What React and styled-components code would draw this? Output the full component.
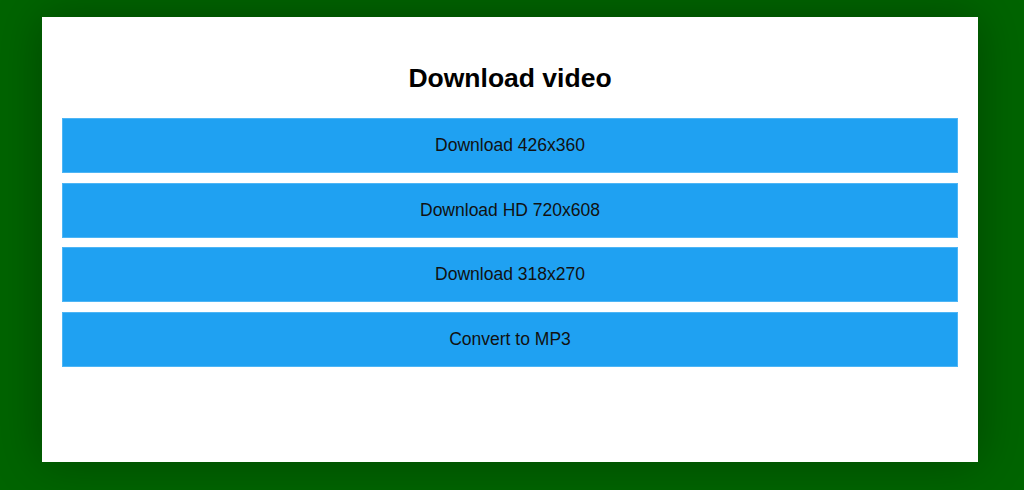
import React from "react";
import { styled, createGlobalStyle } from "styled-components";

const GlobalStyle = createGlobalStyle`
  html, body {
    margin: 0;
    padding: 0;
    background: #006400;
    font-family: "Liberation Sans", Arial, sans-serif;
  }
`;

const Page = styled.div`
  width: 1024px;
  height: 490px;
  padding: 17px 46px 0 42px;
  box-sizing: border-box;
`;

const Card = styled.div`
  background: #ffffff;
  height: 445px;
  padding: 0 20px;
  box-sizing: border-box;
  box-shadow: 0 0 45px rgba(0, 0, 0, 0.3);
  overflow: hidden;
`;

const Title = styled.h2`
  margin: 46px 0 25px;
  font-size: 26.5px;
  line-height: 30px;
  font-weight: 700;
  text-align: center;
  color: #000;
`;

const ButtonList = styled.div`
  display: flex;
  flex-direction: column;
  gap: 9.5px;
`;

const DownloadButton = styled.button`
  height: 55px;
  width: 100%;
  border: 1px solid #4db5f5;
  background: #1fa1f2;
  color: #111;
  font-family: "Liberation Sans", Arial, sans-serif;
  font-size: 17.5px;
  cursor: pointer;
  padding: 0;
`;

const options = [
  "Download 426x360",
  "Download HD 720x608",
  "Download 318x270",
  "Convert to MP3",
];

export default function App() {
  return (
    <>
      <GlobalStyle />
      <Page>
        <Card>
          <Title>Download video</Title>
          <ButtonList>
            {options.map((label) => (
              <DownloadButton key={label}>{label}</DownloadButton>
            ))}
          </ButtonList>
        </Card>
      </Page>
    </>
  );
}
